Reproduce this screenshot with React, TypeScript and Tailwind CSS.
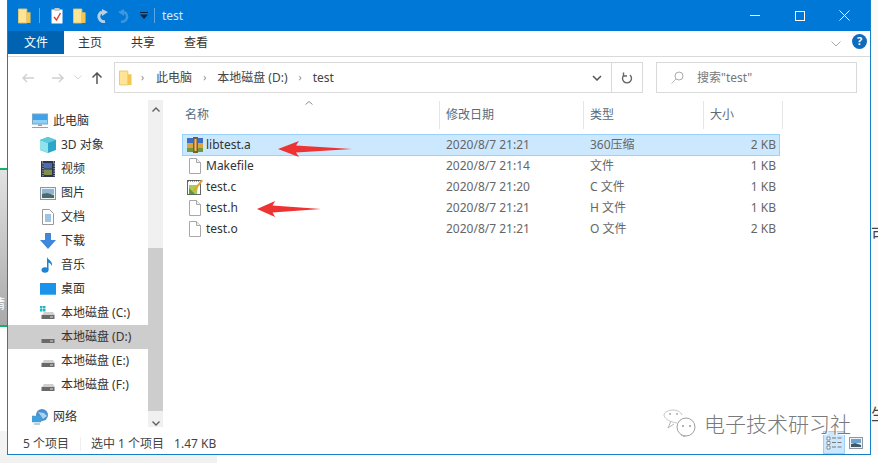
const FONT = "font-['Noto_Sans','Noto_Sans_CJK_SC',sans-serif]";

function Folder({ className }: { className?: string }) {
  return (
    <svg viewBox="0 0 14 16" className={className}>
      <path d="M.5.5h9v15h-9z" fill="#fde595" stroke="#e8c76f" />
      <path d="M9.500 4h4v11.500h-4z" fill="#f4c64f" />
    </svg>
  );
}

function BlankFile() {
  return (
    <svg viewBox="0 0 16 16" className="w-4 h-4 shrink-0">
      <path d="M2.500.5h7l4 4v11h-11z" fill="#fff" stroke="#a8a8a8" />
      <path d="M9.500.5v4h4" fill="#f0f0f0" stroke="#a8a8a8" />
    </svg>
  );
}

function RarIcon() {
  return (
    <svg viewBox="0 0 16 16" className="w-4 h-4 shrink-0">
      <rect x="0" y="1" width="16" height="5" fill="#3f6fc4" />
      <rect x="0" y="6" width="16" height="5" fill="#d9a441" />
      <rect x="0" y="11" width="16" height="4" fill="#6e9a3c" />
      <rect x="6" y="0" width="5" height="16" fill="#8a5a1e" />
      <rect x="7.500" y="2" width="2" height="12" fill="#e8c26a" />
    </svg>
  );
}

function CFile() {
  return (
    <svg viewBox="0 0 16 16" className="w-4 h-4 shrink-0">
      <rect x=".5" y="1.500" width="13" height="14" fill="#fff" stroke="#666" />
      <path d="M1 2h12" stroke="#444" strokeDasharray="1 1" />
      <path d="M2 6l9 0-1 9H2z" fill="#a5cc58" />
      <path d="M2 15V9l6 6z" fill="#5f9a2c" />
      <path d="M6 11L14.500.5l1.500 1.500L7.500 12.500z" fill="#e3a72f" />
    </svg>
  );
}

function Drive({ win }: { win?: boolean }) {
  return (
    <svg viewBox="0 0 16 14" className="w-4 h-3.5 shrink-0">
      {win && <path d="M0 0h2.500v2.500H0zM3 0h2.500v2.500H3zM0 3h2.500v2.500H0zM3 3h2.500v2.500H3z" fill="#21b5c9" />}
      <path d="M2 9l2-3h9l2 3z" fill="#cfcfcf" />
      <rect x="1.500" y="9" width="13" height="4" fill="#6a6a6a" />
      <rect x="10" y="10.500" width="3" height="1" fill="#ddd" />
    </svg>
  );
}

function NavIcon({ kind }: { kind: string }) {
  if (kind === "pc")
    return (
      <svg viewBox="0 0 16 16" className="w-4 h-4 shrink-0">
        <rect x=".5" y="1" width="15" height="10" fill="#3da2ea" stroke="#7aa7c7" />
        <rect x="1" y="7" width="14" height="3.500" fill="#8fd0f7" />
        <path d="M6 11.500h4v1.500H6z" fill="#9a9a9a" />
        <path d="M0 14.500h16" stroke="#a89a9a" />
      </svg>
    );
  if (kind === "3d")
    return (
      <svg viewBox="0 0 16 16" className="w-4 h-4 shrink-0">
        <path d="M8 0l8 3v10l-8 3-8-3V3z" fill="#2ea6c9" />
        <path d="M0 3l8 3v10l-8-3z" fill="#8fe4ec" />
        <path d="M8 0l8 3-8 3-8-3z" fill="#5cc9de" />
      </svg>
    );
  if (kind === "video")
    return (
      <svg viewBox="0 0 14 16" className="w-3.5 h-4 shrink-0">
        <rect width="14" height="16" fill="#2c3550" />
        <rect x="3" y="2" width="8" height="5.500" fill="#4d6ca8" />
        <rect x="3" y="8.500" width="8" height="5.500" fill="#7d8f4a" />
        <path d="M.8 1h1.200v14H.8M12 1h1.200v14H12" stroke="#d5d5d5" strokeDasharray="1.200 1.200" fill="none" />
      </svg>
    );
  if (kind === "pic")
    return (
      <svg viewBox="0 0 16 13" className="w-4 h-[13px] shrink-0">
        <rect x=".5" y=".5" width="15" height="12" fill="#eef3f7" stroke="#8b98a4" />
        <rect x="2" y="2" width="12" height="5" fill="#8db6d6" />
        <path d="M2 7l5-1 7 2v3H2z" fill="#4f6a66" />
      </svg>
    );
  if (kind === "doc")
    return (
      <svg viewBox="0 0 14 16" className="w-3.5 h-4 shrink-0">
        <path d="M1.500.5h7l4 4v11h-11z" fill="#fff" stroke="#9a9a9a" />
        <path d="M4 6h6M4 8h6M4 10h6M4 12h6" stroke="#3c87c9" />
      </svg>
    );
  if (kind === "down")
    return (
      <svg viewBox="0 0 16 16" className="w-4 h-4 shrink-0">
        <path d="M5 0h6v7h5l-8 9-8-9h5z" fill="#3f87d8" />
      </svg>
    );
  if (kind === "music")
    return (
      <svg viewBox="0 0 14 16" className="w-3.5 h-4 shrink-0">
        <ellipse cx="4" cy="13" rx="3.500" ry="2.700" fill="#1c84d6" />
        <path d="M6 13V0c1 3 6 4 5 9-1-2-2-3-3.500-3.500V13z" fill="#1c84d6" />
      </svg>
    );
  if (kind === "desk")
    return (
      <svg viewBox="0 0 16 12" className="w-4 h-3 shrink-0">
        <rect width="16" height="12" fill="#1b93ea" />
        <path d="M.5 11.500h15" stroke="#9bd0f5" strokeDasharray="1 1" />
      </svg>
    );
  return (
    <svg viewBox="0 0 16 16" className="w-4 h-4 shrink-0">
      <circle cx="10" cy="6" r="6" fill="#4b8fd0" />
      <path d="M6 3l6 1 3 3-4 3z" fill="#a9d3ef" />
      <rect x="0" y="7" width="9" height="6" fill="#3ba3e3" stroke="#6b8ea8" strokeWidth=".5" />
      <path d="M2 15h6" stroke="#7a9ab3" />
    </svg>
  );
}

const navRows = [
  { kind: "pc", label: "此电脑", top: true },
  { kind: "3d", label: "3D 对象" },
  { kind: "video", label: "视频" },
  { kind: "pic", label: "图片" },
  { kind: "doc", label: "文档" },
  { kind: "down", label: "下载" },
  { kind: "music", label: "音乐" },
  { kind: "desk", label: "桌面" },
];

const drives = [
  { label: "本地磁盘 (C:)", win: true },
  { label: "本地磁盘 (D:)", active: true },
  { label: "本地磁盘 (E:)" },
  { label: "本地磁盘 (F:)" },
];

const files = [
  { name: "libtest.a", date: "2020/8/7 21:21", type: "360压缩", size: "2 KB", icon: <RarIcon />, selected: true },
  { name: "Makefile", date: "2020/8/7 21:14", type: "文件", size: "1 KB", icon: <BlankFile /> },
  { name: "test.c", date: "2020/8/7 21:20", type: "C 文件", size: "1 KB", icon: <CFile /> },
  { name: "test.h", date: "2020/8/7 21:21", type: "H 文件", size: "1 KB", icon: <BlankFile /> },
  { name: "test.o", date: "2020/8/7 21:21", type: "O 文件", size: "2 KB", icon: <BlankFile /> },
];

function Arrow({ className }: { className: string }) {
  return (
    <svg viewBox="0 0 74 16" preserveAspectRatio="none" className={`absolute ${className}`}>
      <path d="M0 8L21 0l-3 4.500 56 3.500-56 3.500 3 4.500z" fill="#ee3333" />
    </svg>
  );
}

export default function App() {
  return (
    <div className={`relative w-[878px] h-[463px] overflow-hidden bg-white text-[12px] ${FONT}`}>
      <div className="flex h-[455px]">
        {/* page behind, left edge */}
        <div className="w-[7px] shrink-0 flex flex-col bg-white">
          <div className="h-[168px]" />
          <div className="h-[159px] flex items-end overflow-hidden bg-gradient-to-b from-[#e2e2e2] to-[#a9a9a9] border-y-2 border-[#17b26a]">
            <span className="mb-[12px] -ml-[8px] text-white text-[13px]">精</span>
          </div>
          <div className="mt-[104px] flex-1 bg-[#f3f3f3]" />
        </div>

        {/* explorer window */}
        <div className="w-[864px] shrink-0 flex flex-col bg-white border-r border-b border-l border-[#1580c8]">
          {/* title */}
          <div className="h-[31px] shrink-0 bg-[#0078d7] flex items-center text-white">
            <Folder className="ml-[10px] w-[13px] h-[16px]" />
            <div className="ml-[8px] w-px h-[15px] bg-[#5aa8e6]" />
            <svg viewBox="0 0 12 16" className="ml-[11px] w-3 h-4">
              <path d="M.5 1.500h11v14H.5z" fill="#fff" />
              <rect x="3.500" y="0" width="5" height="3" fill="#c9c9c9" />
              <path d="M3 9l2.500 3L9.500 5" stroke="#d9482b" strokeWidth="1.500" fill="none" />
            </svg>
            <Folder className="ml-[10px] w-[13px] h-[16px]" />
            <svg viewBox="0 0 14 14" className="ml-[9px] w-[14px] h-[14px]">
              <path d="M10 12.500A5 5 0 0 1 7 3" stroke="#b9cfe3" strokeWidth="3" fill="none" />
              <path d="M7 0l6 3-6 4z" fill="#b9cfe3" />
            </svg>
            <svg viewBox="0 0 14 14" className="ml-[8px] w-[14px] h-[14px]">
              <path d="M4 12.500A5 5 0 0 0 7 3" stroke="#3f96dc" strokeWidth="2.500" fill="none" />
              <path d="M7 0L1 3l6 4z" fill="#3f96dc" />
            </svg>
            <svg viewBox="0 0 8 7" className="ml-[9px] w-2 h-[7px]">
              <path d="M0 0h8v1H0zM0 2.500h8L4 7z" fill="#10233a" />
            </svg>
            <div className="ml-[6px] w-px h-[15px] bg-[#5aa8e6]" />
            <span className="ml-[7px] text-[12px] text-[#d5e9f9]">test</span>
            <div className="ml-auto flex items-center">
              <div className="w-[45px] flex justify-center">
                <div className="w-[10px] h-px bg-white" />
              </div>
              <div className="w-[45px] flex justify-center">
                <div className="w-[10px] h-[10px] border border-white" />
              </div>
              <div className="w-[45px] mr-[3px] flex justify-center">
                <svg viewBox="0 0 11 11" className="w-[11px] h-[11px]">
                  <path d="M.5.5l10 10M10.500.5l-10 10" stroke="#fff" />
                </svg>
              </div>
            </div>
          </div>

          {/* ribbon tabs */}
          <div className="h-[26px] shrink-0 flex items-start border-b border-[#dadada] text-[#333]">
            <div className="w-[56px] h-[23px] bg-[#0063b1] text-white flex items-center justify-center">文件</div>
            <span className="ml-[14px] mt-[3px]">主页</span>
            <span className="ml-[29px] mt-[3px]">共享</span>
            <span className="ml-[29px] mt-[3px]">查看</span>
            <svg viewBox="0 0 10 6" className="ml-auto mt-[10px] w-[10px] h-[6px]">
              <path d="M.5.5L5 5 9.500.5" stroke="#a9a9a9" fill="none" />
            </svg>
            <div className="ml-[11px] mr-[3px] mt-[3px] w-[15px] h-[15px] rounded-full bg-[#0f6cbd] text-white text-[11px] font-bold flex items-center justify-center">?</div>
          </div>

          {/* nav */}
          <div className="h-[43px] shrink-0 pb-[2px] flex items-center text-[#444]">
            <svg viewBox="0 0 12 10" className="ml-[14px] w-3 h-[10px]">
              <path d="M12 5H1M5 1L1 5l4 4" stroke="#cfcfcf" strokeWidth="1.400" fill="none" />
            </svg>
            <svg viewBox="0 0 12 10" className="ml-[18px] w-3 h-[10px]">
              <path d="M0 5h11M7 1l4 4-4 4" stroke="#cfcfcf" strokeWidth="1.400" fill="none" />
            </svg>
            <svg viewBox="0 0 8 5" className="ml-[10px] w-2 h-[5px]">
              <path d="M.5.5L4 4 7.500.5" stroke="#d5d5d5" fill="none" />
            </svg>
            <svg viewBox="0 0 12 12" className="ml-[9px] w-3 h-3">
              <path d="M6 12V1M1.500 5.500L6 1l4.500 4.500" stroke="#555" strokeWidth="1.500" fill="none" />
            </svg>
            <div className="ml-[11px] w-[529px] h-[31px] flex items-center border border-[#d9d9d9]">
              <Folder className="ml-[4px] w-[13px] h-[16px]" />
              <span className="ml-[9px] text-[#888] text-[10px]">›</span>
              <span className="ml-[12px]">此电脑</span>
              <span className="ml-[11px] text-[#888] text-[10px]">›</span>
              <span className="ml-[11px]">本地磁盘 (D:)</span>
              <span className="ml-[11px] text-[#888] text-[10px]">›</span>
              <span className="ml-[11px]">test</span>
              <div className="ml-auto h-full flex items-center">
                <svg viewBox="0 0 10 6" className="mr-[9px] w-[10px] h-[6px]">
                  <path d="M1 1l4 4 4-4" stroke="#555" strokeWidth="1.500" fill="none" />
                </svg>
                <div className="w-[31px] h-full border-l border-[#d9d9d9] flex items-center justify-center">
                  <svg viewBox="0 0 12 12" className="w-3 h-3">
                    <path d="M3 3a4.500 4.500 0 1 0 6 0M2.500 .5V4H6" stroke="#666" strokeWidth="1.400" fill="none" />
                  </svg>
                </div>
              </div>
            </div>
            <div className="ml-[13px] w-[201px] h-[31px] flex items-center border border-[#d9d9d9] text-[#777]">
              <svg viewBox="0 0 13 13" className="ml-[14px] w-[13px] h-[13px]">
                <circle cx="8" cy="5" r="4" stroke="#aaa" fill="none" />
                <path d="M5 8l-4.500 4.500" stroke="#bbb" />
              </svg>
              <span className="ml-[13px]">搜索"test"</span>
            </div>
          </div>

          {/* body */}
          <div className="flex-1 min-h-0 flex">
            {/* sidebar */}
            <div className="w-[140px] shrink-0 pt-[9px] text-[#333]">
              {navRows.map((row) => (
                <div key={row.label} className={`h-[24px] flex items-center gap-[5px] ${row.top ? "pl-[24px]" : "pl-[32px]"}`}>
                  <div className="w-4 flex justify-center">
                    <NavIcon kind={row.kind} />
                  </div>
                  <span>{row.label}</span>
                </div>
              ))}
              {drives.map((d) => (
                <div key={d.label} className={`h-[24px] flex items-center pl-[32px] ${d.active ? "bg-[#cdcdcd]" : ""}`}>
                  <Drive win={d.win} />
                  <span className="ml-[5px] whitespace-nowrap">{d.label}</span>
                </div>
              ))}
              <div className="h-[24px] mt-[8px] flex items-center pl-[24px] gap-[5px]">
                <NavIcon kind="net" />
                <span>网络</span>
              </div>
            </div>

            {/* scrollbar */}
            <div className="w-[15px] shrink-0 bg-[#f0f0f0] flex flex-col items-center">
              <svg viewBox="0 0 8 5" className="mt-[7px] w-2 h-[5px]">
                <path d="M.5 4.500L4 1l3.500 3.500" stroke="#606060" strokeWidth="1.400" fill="none" />
              </svg>
              <div className="mt-[136px] w-full h-[163px] bg-[#cdcdcd]" />
              <svg viewBox="0 0 8 5" className="mt-[10px] w-2 h-[5px]">
                <path d="M.5.5L4 4 7.500.5" stroke="#606060" strokeWidth="1.400" fill="none" />
              </svg>
            </div>

            {/* list */}
            <div className="flex-1 min-w-0">
              <div className="mt-[1px] h-[28px] flex text-[#5a6a7a]">
                <div className="relative w-[264px] ml-[12px] pl-[10px] flex items-center">
                  名称
                  <svg viewBox="0 0 8 4" className="absolute left-[130px] top-0 w-2 h-1">
                    <path d="M.5 3.500L4 .5l3.500 3" stroke="#8f8f8f" fill="none" />
                  </svg>
                </div>
                <div className="w-[144px] pl-[6px] flex items-center border-l border-[#e5e5e5]">修改日期</div>
                <div className="w-[120px] pl-[6px] flex items-center border-l border-[#e5e5e5]">类型</div>
                <div className="w-[80px] pl-[6px] flex items-center border-x border-[#e5e5e5]">大小</div>
              </div>
              <div className="mt-[5px] ml-[19px] w-[598px] text-[#555]">
                {files.map((f) => (
                  <div key={f.name} className={`flex items-center border ${f.selected ? "h-[22px] -mb-px bg-[#cce8ff] border-[#99d1ff]" : "h-[21px] border-transparent"}`}>
                    <div className="w-[263px] pl-[4px] flex items-center gap-[3px] text-[#333]">
                      {f.icon}
                      <span>{f.name}</span>
                    </div>
                    <div className="w-[144px] text-[#666]">{f.date}</div>
                    <div className="w-[120px] text-[#666]">{f.type}</div>
                    <div className="w-[66px] text-right text-[#666]">{f.size}</div>
                  </div>
                ))}
              </div>
            </div>
          </div>

          {/* status */}
          <div className="h-[27px] shrink-0 pt-[6px] flex items-center text-[#444]">
            <span className="ml-[15px]">5 个项目</span>
            <div className="ml-[11px] w-px h-[14px] bg-[#eeeeee]" />
            <span className="ml-[10px]">选中 1 个项目</span>
            <span className="ml-[10px]">1.47 KB</span>
            <div className="ml-auto mr-[7px] flex items-end self-end gap-[4px]">
              <div className="w-[22px] h-[23px] bg-[#cce8ff] border border-[#99d1ff] flex items-center justify-center">
                <svg viewBox="0 0 16 14" className="w-4 h-3.5">
                  <path d="M1 1h3v3H1zM1 5.500h3v3H1zM1 10h3v3H1z" fill="#fff" stroke="#666" strokeWidth=".7" />
                  <path d="M6 2h4M11.500 2h4M6 6.500h4M11.500 6.500h4M6 11h4M11.500 11h4" stroke="#777" />
                </svg>
              </div>
              <svg viewBox="0 0 14 12" className="mb-[5px] w-[14px] h-3">
                <rect x=".5" y=".5" width="13" height="11" fill="#eef3f7" stroke="#8b98a4" />
                <rect x="2" y="2" width="10" height="4" fill="#6da3cf" />
                <path d="M2 7l4-1 6 2v2H2z" fill="#3e5a66" />
              </svg>
            </div>
          </div>
        </div>

        {/* page behind, right edge */}
        <div className="flex-1 flex flex-col overflow-hidden bg-[#fdfbfa] text-[#444] text-[16px] leading-none">
          <span className="mt-[226px] whitespace-nowrap">可</span>
          <span className="mt-[164px] whitespace-nowrap">生</span>
        </div>
      </div>
      <div className="h-[8px] flex">
        <div className="w-[217px] bg-[#f1f1f1]" />
        <div className="flex-1 bg-white" />
      </div>

      {/* red annotation arrows */}
      <Arrow className="left-[278px] top-[141px] w-[74px] h-[16px]" />
      <Arrow className="left-[257px] top-[201px] w-[64px] h-[16px]" />

      {/* watermark */}
      <div className="absolute left-[663px] top-[409px] flex items-center">
        <svg viewBox="0 0 34 28" className="w-[34px] h-[28px]">
          <path d="M14 14C6 13 1 9 1 6c0-3 5-5 9-5s8 2 9 5" fill="none" stroke="#c7c7c7" />
          <circle cx="23" cy="18" r="9" fill="none" stroke="#9f9f9f" />
          <path d="M8 12l-3 7 6-4M18 26l4 2 0-2" fill="none" stroke="#b5b5b5" />
          <circle cx="7" cy="5" r="1" fill="#aaa" />
          <circle cx="14" cy="5" r="1" fill="#aaa" />
          <circle cx="20" cy="17" r="1" fill="#999" />
          <circle cx="27" cy="17" r="1" fill="#999" />
        </svg>
        <span className="ml-[7px] text-[21px] leading-none text-[#7a7a7a] font-['Noto_Sans_CJK_SC',sans-serif] font-light whitespace-nowrap [text-shadow:1px_1px_0_#fff]">电子技术研习社</span>
      </div>
    </div>
  );
}
